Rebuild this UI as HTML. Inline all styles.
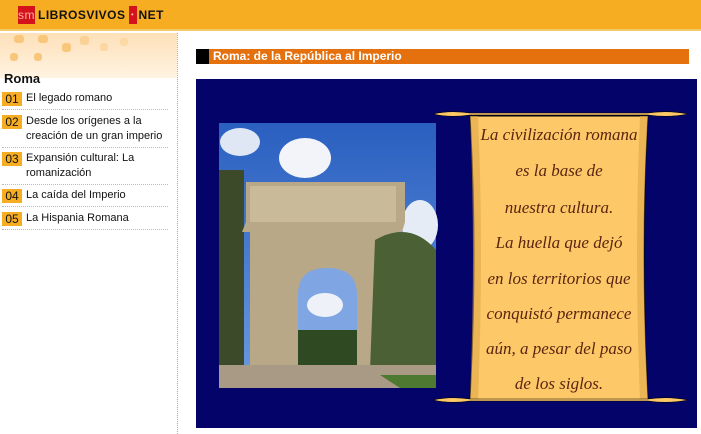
<!DOCTYPE html>
<html><head><meta charset="utf-8"><style>
*{margin:0;padding:0;box-sizing:border-box}
body{width:701px;height:434px;overflow:hidden;background:#fff;font-family:"Liberation Sans",Arial,sans-serif;position:relative}
#hdr{position:absolute;left:0;top:0;width:701px;height:31px;background:#f7ad22;border-bottom:2px solid #f5c96a}
#logo{position:absolute;left:18px;top:6px;height:17px;display:flex;align-items:center;font-weight:bold;font-size:12px;color:#111;letter-spacing:0.5px}
.sm{background:#d4121c;color:#f9b0a0;width:17px;height:18px;font-size:12px;font-weight:normal;text-align:center;line-height:18px}
#side{position:absolute;left:0;top:33px;width:178px;height:401px;border-right:1px dotted #d9a060}
#sidetop{height:45px;background:linear-gradient(180deg,#fde0b8,#fff3e2)}
.dot{position:absolute;border-radius:3px;background:#f9c77c}
h3{position:absolute;left:4px;top:71px;font-size:13px;font-weight:bold;color:#111}
.it{position:absolute;left:2px;width:166px;border-bottom:1px dotted #bbb;font-size:11px;color:#111;line-height:15px;padding-left:24px}
.it b{position:absolute;left:0;top:1px;background:#f7ad22;font-weight:normal;font-size:12px;width:20px;height:14px;line-height:14px;text-align:center;color:#111}
#title{position:absolute;left:196px;top:49px;width:493px;height:15px;background:#e5700e;color:#fff;font-size:12px;font-weight:bold;line-height:15px;padding-left:17px}
#title i{position:absolute;left:0;top:0;width:13px;height:15px;background:#000}
#blue{position:absolute;left:196px;top:79px;width:501px;height:349px;background:#03036a}
.txt{position:absolute;left:466px;width:186px;text-align:center;font-family:"Liberation Serif",serif;font-style:italic;font-size:17px;color:#5a2410;white-space:nowrap}
</style></head><body>
<div id="hdr"><div id="logo"><span class="sm">sm</span><span style="margin:0 3px">LIBROSVIVOS</span><span class="sm" style="width:8px;font-size:8px">•</span><span style="margin-left:2px">NET</span></div></div>
<div id="side"><div id="sidetop"></div>
<div class="dot" style="left:14px;top:2px;width:10px;height:8px"></div>
<div class="dot" style="left:38px;top:2px;width:10px;height:8px"></div>
<div class="dot" style="left:62px;top:10px;width:9px;height:9px"></div>
<div class="dot" style="left:80px;top:3px;width:9px;height:9px;opacity:.6"></div>
<div class="dot" style="left:10px;top:20px;width:8px;height:8px"></div>
<div class="dot" style="left:34px;top:20px;width:8px;height:8px"></div>
<div class="dot" style="left:100px;top:10px;width:8px;height:8px;opacity:.5"></div>
<div class="dot" style="left:120px;top:5px;width:8px;height:8px;opacity:.4"></div>
</div>
<h3>Roma</h3>
<div class="it" style="top:91px;height:19px"><b>01</b>El legado romano</div>
<div class="it" style="top:114px;height:34px"><b>02</b>Desde los orígenes a la creación de un gran imperio</div>
<div class="it" style="top:151px;height:34px"><b>03</b>Expansión cultural: La romanización</div>
<div class="it" style="top:188px;height:19px"><b>04</b>La caída del Imperio</div>
<div class="it" style="top:211px;height:19px"><b>05</b>La Hispania Romana</div>
<div id="title"><i></i>Roma: de la República al Imperio</div>
<div id="blue"></div>
<svg style="position:absolute;left:0;top:0" width="701" height="434">
<defs><linearGradient id="sky" x1="0" y1="0" x2="0" y2="1"><stop offset="0" stop-color="#2a5fc0"/><stop offset="1" stop-color="#6a9be0"/></linearGradient></defs>
<rect x="219" y="123" width="217" height="265" fill="url(#sky)"/>
<ellipse cx="305" cy="158" rx="26" ry="20" fill="#f2f4fa"/>
<ellipse cx="240" cy="142" rx="20" ry="14" fill="#dfe6f4"/>
<ellipse cx="420" cy="225" rx="18" ry="25" fill="#e6ecf6"/>
<rect x="219" y="170" width="25" height="210" fill="#3c4a2a"/>
<path d="M246 182 H405 V222 L402 232 H398 V365 H250 V232 H242 L246 222Z" fill="#b8a888"/>
<rect x="250" y="186" width="146" height="36" fill="#c9bb9a"/>
<path d="M298 365 V295 Q298 268 327 268 Q357 268 357 295 V365Z" fill="#7fa6e2"/>
<ellipse cx="325" cy="305" rx="18" ry="12" fill="#eef2f8"/>
<rect x="298" y="330" width="59" height="35" fill="#2f4a22"/>
<path d="M375 240 Q410 220 436 250 V370 H370Z" fill="#4b6034"/>
<rect x="219" y="365" width="217" height="23" fill="#a89a84"/>
<path d="M380 375 H436 V388 H400Z" fill="#4d7a30"/>
<path d="M470 116 H648 Q640 250 648 400 H470 Q478 250 470 116Z" fill="#fdc968" stroke="#000" stroke-width="1"/>
<path d="M470 116 Q476 250 470 400 H478 Q484 250 478 116Z" fill="#e0a84a" opacity=".6"/>
<path d="M640 116 Q634 250 640 400 H648 Q640 250 648 116Z" fill="#e0a84a" opacity=".6"/>
<path d="M433 114 Q450 110 470 113 H648 Q668 110 688 114 Q668 118 648 115 H470 Q450 118 433 114Z" fill="#fdc968" stroke="#000" stroke-width=".6"/>
<path d="M433 400 Q450 396 470 399 H648 Q668 396 688 400 Q668 404 648 401 H470 Q450 404 433 400Z" fill="#fdc968" stroke="#000" stroke-width=".6"/>
</svg>
<div class="txt" style="top:125px">La civilización romana</div>
<div class="txt" style="top:161px">es la base de</div>
<div class="txt" style="top:198px">nuestra cultura.</div>
<div class="txt" style="top:233px">La huella que dejó</div>
<div class="txt" style="top:269px">en los territorios que</div>
<div class="txt" style="top:304px">conquistó permanece</div>
<div class="txt" style="top:339px">aún,  a pesar del paso</div>
<div class="txt" style="top:374px">de los siglos.</div>
</body></html>
